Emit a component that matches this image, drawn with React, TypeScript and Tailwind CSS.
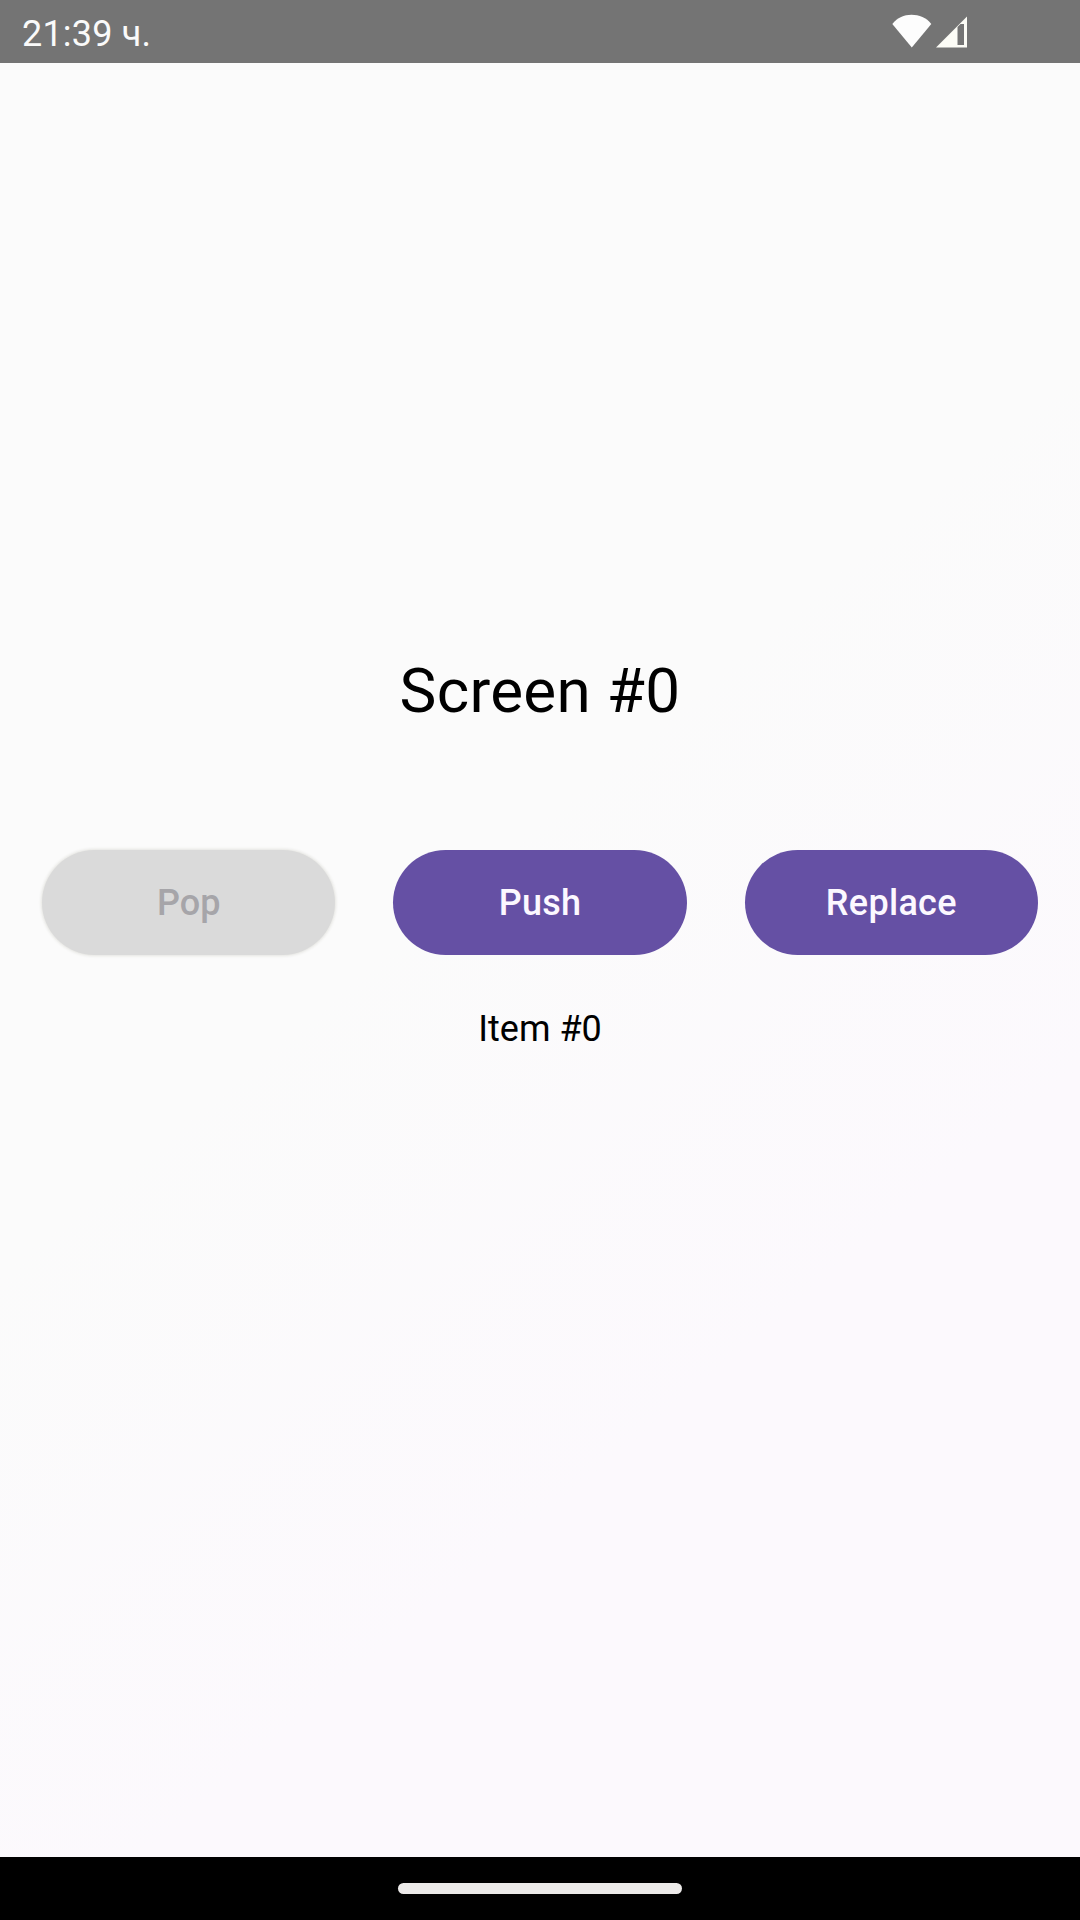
import React from 'react';

const WifiIcon = () => (
  <svg width="40" height="34" viewBox="0 0 40 34" fill="#fdfdfd">
    <path d="M0.3 10C5.5 3.5 12 .8 19.5.8S34.500 3.500 39.300 10L19.800 33.500Z" />
  </svg>
);

const SignalIcon = () => (
  <svg width="31" height="32" viewBox="0 0 31 32">
    <path d="M31 0.500V31.500H0Z" fill="#fcfcf6" />
    <path d="M21.500 11L24.500 8H28V29H21.500Z" fill="#747474" />
  </svg>
);

type PillProps = { label: string; disabled?: boolean };

const PillButton = ({ label, disabled }: PillProps) => (
  <button
    disabled={disabled}
    className={
      disabled
        ? 'flex h-[105px] flex-1 items-center justify-center rounded-full bg-[#dadada] text-[36px] font-medium text-[#a6a5a9] shadow-[0_0_3px_1px_#e4e4e0]'
        : 'flex h-[105px] flex-1 items-center justify-center rounded-full bg-[#6550a4] text-[36px] font-medium tracking-[0.3px] text-[#fcf8ff]'
    }
  >
    {label}
  </button>
);

export default function App() {
  return (
    <div className="flex h-[1920px] w-[1080px] flex-col overflow-hidden bg-[linear-gradient(140deg,#fbfbfb_45%,#fcf9fd_70%)] font-['Roboto',sans-serif]">
      <header className="flex h-[63px] shrink-0 items-center justify-between bg-[#747474] pr-[113px] pb-[2px] pl-[22px]">
        <span className="pt-[7px] text-[36px] leading-none tracking-[0.2px] text-[#fafafa]">21:39 ч.</span>
        <div className="flex items-end gap-[4px]">
          <WifiIcon />
          <SignalIcon />
        </div>
      </header>
      <main className="flex flex-1 flex-col items-center px-[42px] pt-[586px]">
        <h1 className="h-[84px] text-[62px] leading-[84px] tracking-[0.3px] whitespace-nowrap text-black">Screen #0</h1>
        <div className="mt-[117px] flex w-full gap-[58px]">
          <PillButton label="Pop" disabled />
          <PillButton label="Push" />
          <PillButton label="Replace" />
        </div>
        <p className="mt-[50px] h-[48px] text-[36px] leading-[48px] whitespace-nowrap text-black">Item #0</p>
      </main>
      <footer className="flex h-[63px] shrink-0 items-center justify-center bg-black">
        <div className="h-[11px] w-[284px] rounded-full bg-[#eceae9]" />
      </footer>
    </div>
  );
}
